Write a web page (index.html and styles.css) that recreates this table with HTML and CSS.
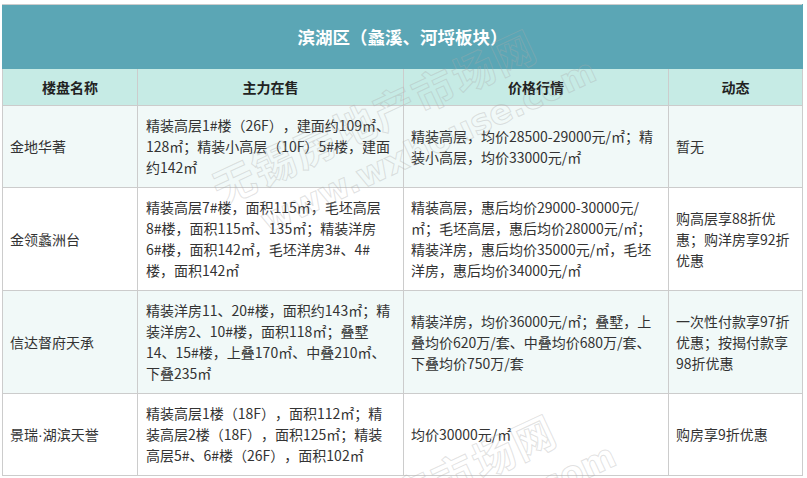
FILE: index.html
```html
<!DOCTYPE html>
<html lang="zh-CN">
<head>
<meta charset="utf-8">
<title>滨湖区（蠡溪、河埒板块）</title>
<link rel="stylesheet" href="styles.css">
</head>
<body>
<div class="page">
<table class="tbl">
  <colgroup>
    <col class="c1"><col class="c2"><col class="c3"><col class="c4">
  </colgroup>
  <tr class="title-row"><th colspan="4">滨湖区（蠡溪、河埒板块）</th></tr>
  <tr class="head-row"><th>楼盘名称</th><th>主力在售</th><th>价格行情</th><th>动态</th></tr>
  <tr class="odd">
    <td>金地华著</td>
    <td>精装高层1#楼（26F），建面约109㎡、<br>128㎡；精装小高层（10F）5#楼，建面<br>约142㎡</td>
    <td>精装高层，均价28500-29000元/㎡；精<br>装小高层，均价33000元/㎡</td>
    <td>暂无</td>
  </tr>
  <tr class="even">
    <td>金领蠡洲台</td>
    <td>精装高层7#楼，面积115㎡，毛坯高层<br>8#楼，面积115㎡、135㎡；精装洋房<br>6#楼，面积142㎡，毛坯洋房3#、4#<br>楼，面积142㎡</td>
    <td>精装高层，惠后均价29000-30000元/<br>㎡；毛坯高层，惠后均价28000元/㎡；<br>精装洋房，惠后均价35000元/㎡，毛坯<br>洋房，惠后均价34000元/㎡</td>
    <td>购高层享88折优<br>惠；购洋房享92折<br>优惠</td>
  </tr>
  <tr class="odd">
    <td>信达督府天承</td>
    <td>精装洋房11、20#楼，面积约143㎡；精<br>装洋房2、10#楼，面积118㎡；叠墅<br>14、15#楼，上叠170㎡、中叠210㎡、<br>下叠235㎡</td>
    <td>精装洋房，均价36000元/㎡；叠墅，上<br>叠均价620万/套、中叠均价680万/套、<br>下叠均价750万/套</td>
    <td>一次性付款享97折<br>优惠；按揭付款享<br>98折优惠</td>
  </tr>
  <tr class="even">
    <td>景瑞<span class="dot">·</span>湖滨天誉</td>
    <td>精装高层1楼（18F），面积112㎡；精<br>装高层2楼（18F），面积125㎡；精装<br>高层5#、6#楼（26F），面积102㎡</td>
    <td>均价30000元/㎡</td>
    <td>购房享9折优惠</td>
  </tr>
</table>
<div class="wm wm1">无锡房地产市场网<br><span class="wm-url">www.wxhouse.com</span></div>
<div class="wm wm2">无锡房地产市场网<br><span class="wm-url">www.wxhouse.com</span></div>
</div>
</body>
</html>
```
FILE: styles.css
```css
html, body {
  margin: 0;
  padding: 0;
  background: #ffffff;
}
.page {
  position: relative;
  width: 807px;
  height: 478px;
  overflow: hidden;
  padding: 4px 0 0 2px;
  box-sizing: border-box;
}
.tbl {
  width: 800px;
  border-collapse: collapse;
  table-layout: fixed;
  font-family: "Noto Sans CJK SC", "Microsoft YaHei", sans-serif;
  font-size: 14px;
  line-height: 21px;
  color: #333333;
  border: 1px solid #cccccc;
  text-spacing-trim: space-all;
}
.c1 { width: 135px; }
.c2 { width: 266px; }
.c3 { width: 265px; }
.c4 { width: 134px; }
.tbl th, .tbl td {
  border: 1px solid #cccccc;
  padding: 0 7px;
  vertical-align: middle;
  text-align: left;
  white-space: nowrap;
  overflow: hidden;
}
.tbl td:nth-child(2) { padding-left: 8px; }
.dot {
  font-family: "Liberation Sans", sans-serif;
}
.title-row th {
  background: #5ba6b5;
  color: #ffffff;
  font-size: 17.5px;
  font-weight: bold;
  text-align: center;
  height: 63px;
  border-color: #5ba6b5;
  border-top-color: #cccccc;
}
.head-row th {
  background: #c6ebe5;
  color: #222222;
  font-weight: bold;
  text-align: center;
  height: 36px;
}
.odd td {
  background: #f1f9f8;
  padding-top: 9px;
  padding-bottom: 9px;
}
.even td {
  background: #ffffff;
  padding-top: 9px;
  padding-bottom: 9px;
}
.wm {
  position: absolute;
  font-family: "Noto Sans CJK SC", sans-serif;
  font-size: 42px;
  font-weight: bold;
  line-height: 44px;
  color: transparent;
  -webkit-text-stroke: 1px rgba(170, 170, 170, 0.35);
  transform: rotate(-25deg);
  transform-origin: 0 0;
  letter-spacing: 2px;
  white-space: nowrap;
  pointer-events: none;
}
.wm-url {
  display: inline-block;
  margin-left: 30px;
  font-family: "DejaVu Sans", sans-serif;
  font-size: 34px;
  letter-spacing: 0;
}
.wm1 { left: 205px; top: 170px; }
.wm2 { left: 225px; top: 555px; }
```
